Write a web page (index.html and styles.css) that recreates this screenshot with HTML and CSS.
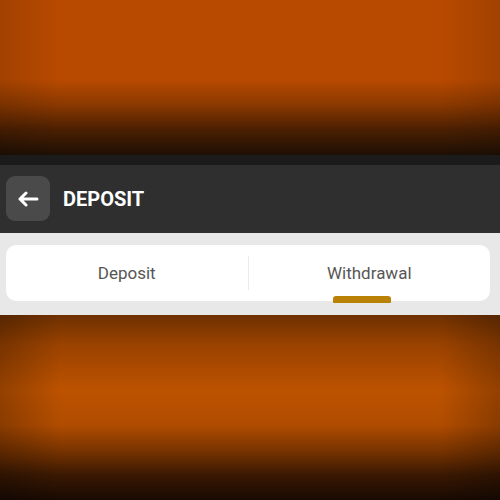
FILE: index.html
```html
<!DOCTYPE html>
<html>
<head>
<meta charset="utf-8">
<link rel="stylesheet" href="styles.css">
</head>
<body>
<div class="page">
  <div class="top"></div>
  <div class="strip"></div>
  <div class="header">
    <button class="back" aria-label="Back">
      <svg width="22" height="16" viewBox="0 0 22 16"><path d="M9 2 L3 8 L9 14 M3 8 H20" fill="none" stroke="#fff" stroke-width="3" stroke-linecap="round" stroke-linejoin="round"/></svg>
    </button>
    <h1 class="title">DEPOSIT</h1>
  </div>
  <div class="tabs-wrap">
    <div class="tabs">
      <div class="tab">Deposit</div>
      <div class="divider"></div>
      <div class="tab active">Withdrawal<span class="bar"></span></div>
    </div>
  </div>
  <div class="bottom"></div>
</div>
</body>
</html>
```
FILE: styles.css
```css
html, body { margin: 0; padding: 0; }
body { width: 500px; height: 500px; overflow: hidden; font-family: Roboto, "Liberation Sans", sans-serif; }
.page { display: flex; flex-direction: column; height: 500px; }
.top {
  height: 155px;
  background:
    linear-gradient(to right, rgba(0,0,0,0.12), rgba(0,0,0,0) 12%, rgba(0,0,0,0) 88%, rgba(0,0,0,0.12)),
    linear-gradient(to bottom, #b84a00 0, #b84a00 80px, #8a3800 105px, #4a1f02 130px, #1e0f04 155px);
}
.strip { height: 10px; background: #1b1b1b; }
.header {
  height: 68px; background: #2f2f2f;
  display: flex; align-items: center; padding-left: 6px; gap: 13px;
}
.back {
  width: 44px; height: 45px; border: 0; border-radius: 9px; background: #4a4a4a;
  display: flex; align-items: center; justify-content: center; padding: 0; margin-top: -1px;
}
.title { margin: 0; color: #fff; font-size: 20px; font-weight: 700; }
.tabs-wrap { height: 82px; background: #e8e8e8; padding: 12px 10px 0 6px; box-sizing: border-box; }
.tabs {
  height: 56px; background: #fff; border-radius: 10px;
  display: flex; align-items: center;
}
.tab {
  flex: 1; position: relative; height: 100%;
  display: flex; align-items: center; justify-content: center;
  color: #555; font-size: 17px;
}
.tab.active { color: #575757; }
.divider { width: 1px; height: 34px; background: #ececec; }
.bar {
  position: absolute; bottom: -2px; left: 50%; margin-left: -36px;
  width: 58px; height: 7px; background: #b98204; border-radius: 3px 3px 1px 1px;
}
.bottom {
  flex: 1;
  background:
    linear-gradient(to right, rgba(0,0,0,0.22), rgba(0,0,0,0) 12%, rgba(0,0,0,0) 88%, rgba(0,0,0,0.22)),
    linear-gradient(to bottom, #6e3000 0, #9a4200 30px, #bc5200 75px, #b04c00 110px, #7a3400 135px, #3a1802 160px, #180a02 185px);
}
```
